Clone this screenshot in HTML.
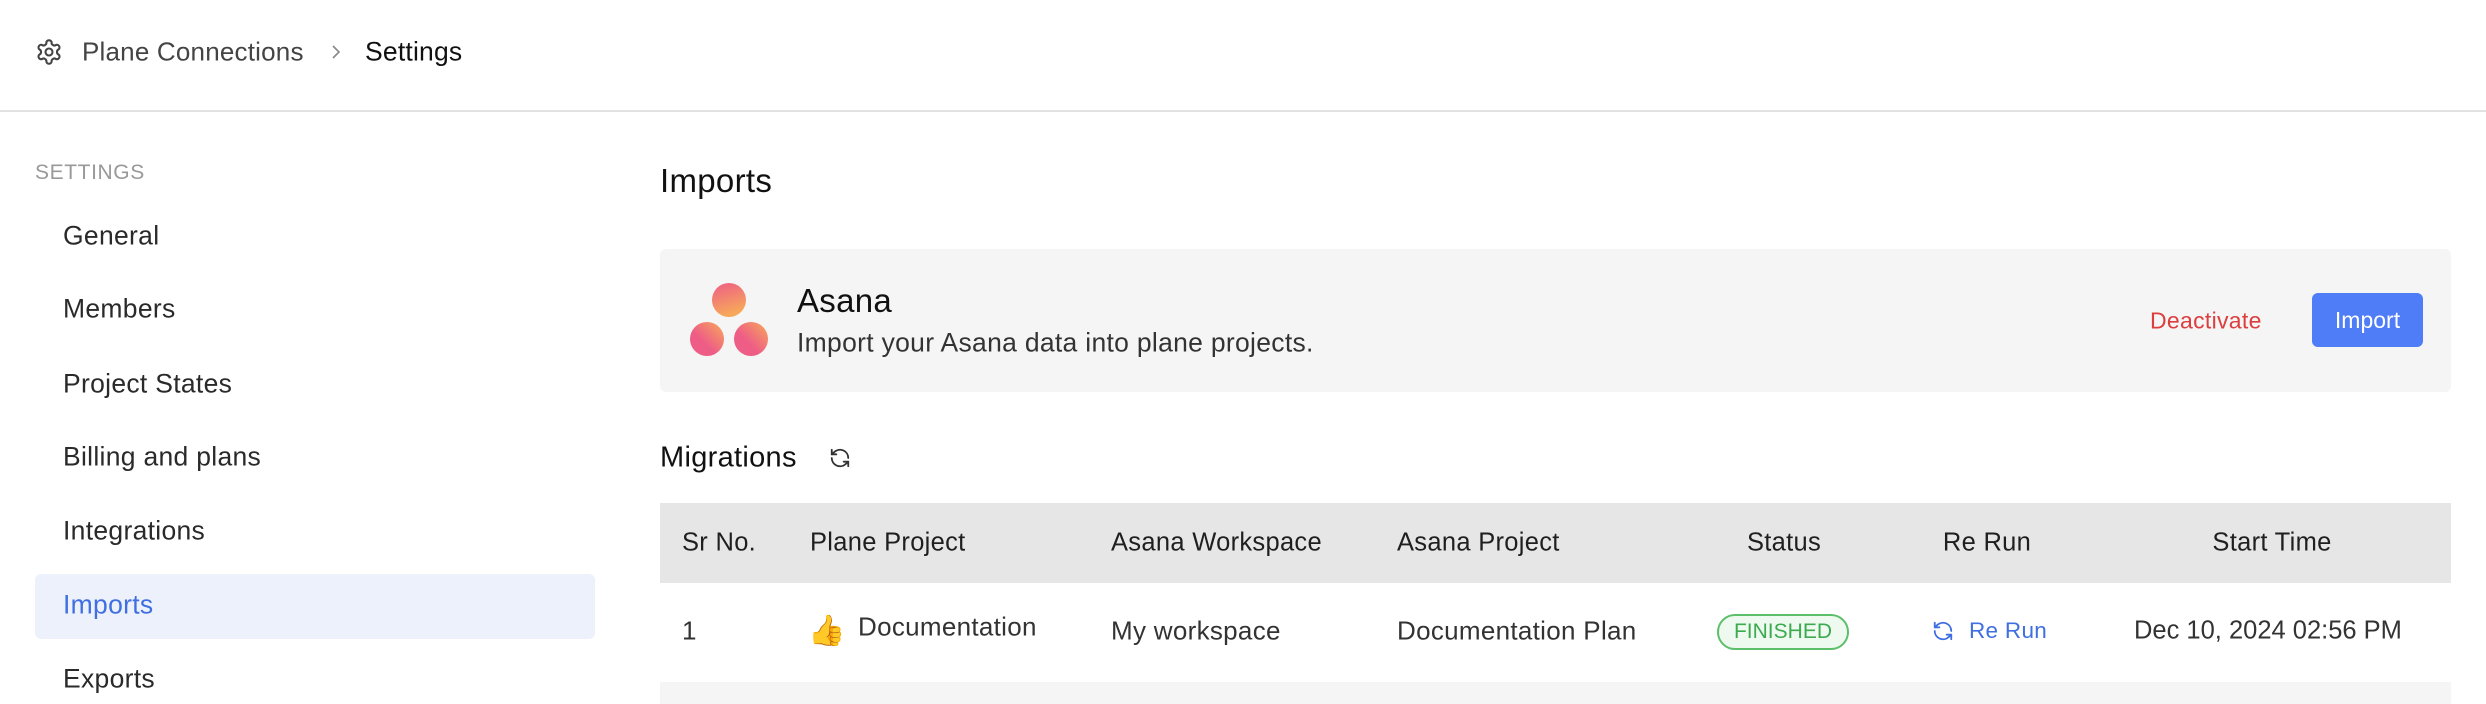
<!DOCTYPE html>
<html><head><meta charset="utf-8"><style>
*{box-sizing:border-box;margin:0;padding:0}
body{width:2486px;height:704px;overflow:hidden;background:#fff;font-family:"Liberation Sans",sans-serif;color:#1f1f1f;position:relative}
.a{position:absolute;white-space:nowrap}
.hdr{position:absolute;left:0;top:0;width:2486px;height:112px;border-bottom:2px solid #e2e2e2}
.nav{position:absolute;left:63px;font-size:26.5px;letter-spacing:0.3px;color:#2a2a2a;transform:translateY(-50%)}
.th{position:absolute;font-size:25.5px;letter-spacing:0.3px;color:#1f1f1f;transform:translateY(-50%);top:543px}
.td{position:absolute;font-size:26px;letter-spacing:0.3px;color:#333;transform:translateY(-50%);top:631px}
</style></head><body>
<div class="hdr"></div>
<svg class="a" style="left:35px;top:38px" width="28" height="28" viewBox="0 0 24 24" fill="none" stroke="#444" stroke-width="1.8" stroke-linecap="round" stroke-linejoin="round"><path d="M12.22 2h-.44a2 2 0 0 0-2 2v.18a2 2 0 0 1-1 1.73l-.43.25a2 2 0 0 1-2 0l-.15-.08a2 2 0 0 0-2.730.73l-.22.38a2 2 0 0 0 .73 2.73l.15.1a2 2 0 0 1 1 1.72v.51a2 2 0 0 1-1 1.740l-.15.09a2 2 0 0 0-.73 2.73l.22.38a2 2 0 0 0 2.73.73l.15-.08a2 2 0 0 1 2 0l.43.25a2 2 0 0 1 1 1.73V20a2 2 0 0 0 2 2h.44a2 2 0 0 0 2-2v-.18a2 2 0 0 1 1-1.73l.43-.25a2 2 0 0 1 2 0l.15.08a2 2 0 0 0 2.73-.73l.22-.39a2 2 0 0 0-.73-2.73l-.15-.08a2 2 0 0 1-1-1.74v-.5a2 2 0 0 1 1-1.74l.15-.09a2 2 0 0 0 .73-2.73l-.22-.38a2 2 0 0 0-2.73-.73l-.15.08a2 2 0 0 1-2 0l-.43-.25a2 2 0 0 1-1-1.73V4a2 2 0 0 0-2-2z"/><circle cx="12" cy="12" r="3"/></svg>
<div class="a" style="left:82px;top:52px;transform:translateY(-50%);font-size:26px;letter-spacing:0.2px;color:#444">Plane Connections</div>
<svg class="a" style="left:329px;top:43px" width="14" height="18" viewBox="0 0 14 18"><path d="M4 3l6 6-6 6" fill="none" stroke="#888" stroke-width="1.6"/></svg>
<div class="a" style="left:365px;top:52px;transform:translateY(-50%);font-size:26.5px;letter-spacing:0.2px;color:#111">Settings</div>

<div class="a" style="left:35px;top:173px;transform:translateY(-50%);font-size:21px;color:#999;letter-spacing:0.6px">SETTINGS</div>
<div class="a" style="left:35px;top:574px;width:560px;height:65px;background:#edf1fc;border-radius:6px"></div>
<div class="nav a" style="top:236px">General</div>
<div class="nav a" style="top:309px">Members</div>
<div class="nav a" style="top:384px">Project States</div>
<div class="nav a" style="top:457px">Billing and plans</div>
<div class="nav a" style="top:531px">Integrations</div>
<div class="nav a" style="top:605px;color:#3f6fe0">Imports</div>
<div class="nav a" style="top:679px">Exports</div>

<div class="a" style="left:660px;top:181px;transform:translateY(-50%);font-size:33px;letter-spacing:0.3px;color:#111">Imports</div>
<div class="a" style="left:660px;top:249px;width:1791px;height:143px;background:#f5f5f5;border-radius:6px"></div>
<svg class="a" style="left:688px;top:281px" width="84" height="78" viewBox="0 0 84 78"><defs><linearGradient id="g" x1="0" y1="0" x2="0.3" y2="1"><stop offset="0" stop-color="#ee5d86"/><stop offset="1" stop-color="#f7a95a"/></linearGradient><linearGradient id="h" x1="1" y1="0" x2="0" y2="1"><stop offset="0" stop-color="#f7a95a"/><stop offset="0.6" stop-color="#ee5d86"/></linearGradient></defs><circle cx="41" cy="19" r="17" fill="url(#g)"/><circle cx="19" cy="58" r="17" fill="url(#h)"/><circle cx="63" cy="58" r="17" fill="url(#h)"/></svg>
<div class="a" style="left:797px;top:301px;transform:translateY(-50%);font-size:33px;letter-spacing:0.3px;color:#111">Asana</div>
<div class="a" style="left:797px;top:343px;transform:translateY(-50%);font-size:26.5px;letter-spacing:0.3px;color:#333">Import your Asana data into plane projects.</div>
<div class="a" style="left:2150px;top:321px;transform:translateY(-50%);font-size:23px;letter-spacing:0.3px;color:#dc3e3e">Deactivate</div>
<div class="a" style="left:2312px;top:293px;width:111px;height:54px;background:#4f7cf7;border-radius:6px;color:#fff;font-size:23px;line-height:54px;text-align:center">Import</div>

<div class="a" style="left:660px;top:458px;transform:translateY(-50%);font-size:29px;letter-spacing:0.3px;color:#111">Migrations</div>
<svg class="a" style="left:829px;top:447px" width="22" height="22" viewBox="0 0 24 24" fill="none" stroke="#333" stroke-width="2" stroke-linecap="round" stroke-linejoin="round"><path d="M21 12a9 9 0 0 0-15-6.7L3 8"/><path d="M3 3v5h5"/><path d="M3 12a9 9 0 0 0 15 6.7L21 16"/><path d="M16 16h5v5"/></svg>

<div class="a" style="left:660px;top:503px;width:1791px;height:80px;background:#e6e6e6"></div>
<div class="th" style="left:682px">Sr No.</div>
<div class="th" style="left:810px">Plane Project</div>
<div class="th" style="left:1111px">Asana Workspace</div>
<div class="th" style="left:1397px">Asana Project</div>
<div class="th" style="left:1784px;transform:translate(-50%,-50%)">Status</div>
<div class="th" style="left:1987px;transform:translate(-50%,-50%)">Re Run</div>
<div class="th" style="left:2272px;transform:translate(-50%,-50%)">Start Time</div>

<div class="td" style="left:682px">1</div>
<div class="td" style="left:808px;font-size:30px">👍</div>
<div class="td" style="left:858px;top:627px">Documentation</div>
<div class="td" style="left:1111px">My workspace</div>
<div class="td" style="left:1397px">Documentation Plan</div>
<div class="a" style="left:1717px;top:614px;width:132px;height:36px;border:2px solid #5cbf6a;border-radius:18px;background:#eefaf0;color:#3daa50;font-size:21px;line-height:32px;text-align:center">FINISHED</div>
<svg class="a" style="left:1932px;top:620px" width="22" height="22" viewBox="0 0 24 24" fill="none" stroke="#3f6fe0" stroke-width="2" stroke-linecap="round" stroke-linejoin="round"><path d="M21 12a9 9 0 0 0-15-6.7L3 8"/><path d="M3 3v5h5"/><path d="M3 12a9 9 0 0 0 15 6.7L21 16"/><path d="M16 16h5v5"/></svg>
<div class="td" style="left:1969px;color:#3f6fe0;font-size:22.5px">Re Run</div>
<div class="td" style="left:2134px;font-size:25.5px;letter-spacing:0">Dec 10, 2024 02:56 PM</div>
<div class="a" style="left:660px;top:682px;width:1791px;height:22px;background:#f5f5f5"></div>
</body></html>
